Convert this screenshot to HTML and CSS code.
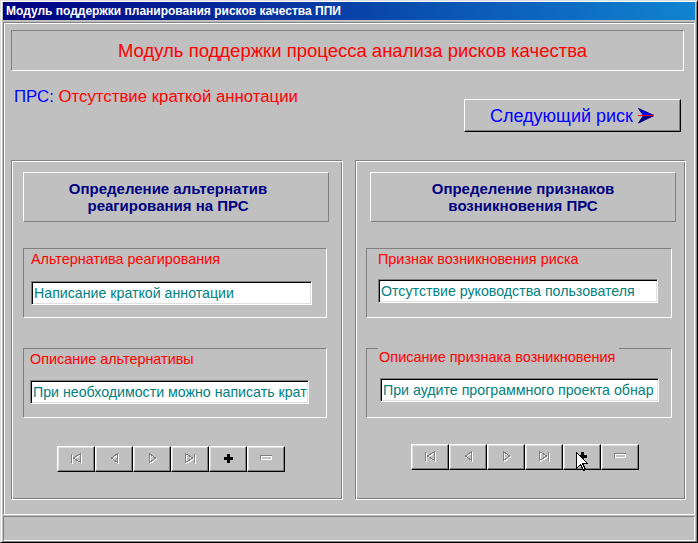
FILE: index.html
```html
<!DOCTYPE html>
<html lang="ru">
<head>
<meta charset="utf-8">
<title>Модуль поддержки планирования рисков качества ППИ</title>
<link rel="stylesheet" href="styles.css">
</head>
<body>
<div class="window">
  <div class="titlebar"><span class="title">Модуль поддержки планирования рисков качества ППИ</span></div>
  <div class="main">
    <div class="banner">Модуль поддержки процесса анализа рисков качества</div>
    <div class="info-row">
      <div class="prs"><span class="prs-key">ПРС:</span> <span class="prs-val">Отсутствие краткой аннотации</span></div>
      <button class="next-btn" type="button"><span>Следующий риск</span><svg class="next-arrow" width="17" height="16" viewBox="0 0 17 16"><polygon points="0.5,0.5 16,7.5 5.5,7.5" fill="#0000ff" stroke="#000080" stroke-width="1"/><polygon points="5.5,7.5 16,7.5 0.5,15" fill="#000080" stroke="#000080" stroke-width="1"/><line x1="0" y1="7.5" x2="16" y2="7.5" stroke="#ff0000" stroke-width="1"/></svg></button>
    </div>
    <div class="panels">
      <section class="panel panel-left">
        <div class="panel-head">Определение альтернатив<br>реагирования на ПРС</div>
        <div class="group group-a">
          <div class="group-label">Альтернатива реагирования</div>
          <div class="field">Написание краткой аннотации</div>
        </div>
        <div class="group group-b">
          <div class="group-label">Описание альтернативы</div>
          <div class="field">При необходимости можно написать крат</div>
        </div>
        <div class="nav">
          <div class="nav-btn"><svg width="13" height="12" viewBox="0 0 13 12"><g fill="none" stroke-width="1" shape-rendering="crispEdges"><path d="M1.5 1.5v9 M10.5 1.5 L3.5 6 L10.5 10.5 Z" stroke="#fff" transform="translate(1 1)"/><path d="M1.5 1.5v9 M10.5 1.5 L3.5 6 L10.5 10.5 Z" stroke="#808080"/></g></svg></div>
          <div class="nav-btn"><svg width="13" height="12" viewBox="0 0 13 12"><g fill="none" stroke-width="1" shape-rendering="crispEdges"><path d="M9.5 1.5 L3.5 6 L9.5 10.5 Z" stroke="#fff" transform="translate(1 1)"/><path d="M9.5 1.5 L3.5 6 L9.5 10.5 Z" stroke="#808080"/></g></svg></div>
          <div class="nav-btn"><svg width="13" height="12" viewBox="0 0 13 12"><g fill="none" stroke-width="1" shape-rendering="crispEdges"><path d="M3.5 1.5 L9.5 6 L3.5 10.5 Z" stroke="#fff" transform="translate(1 1)"/><path d="M3.5 1.5 L9.5 6 L3.5 10.5 Z" stroke="#808080"/></g></svg></div>
          <div class="nav-btn"><svg width="13" height="12" viewBox="0 0 13 12"><g fill="none" stroke-width="1" shape-rendering="crispEdges"><path d="M10.5 1.5v9 M1.5 1.5 L8.5 6 L1.5 10.5 Z" stroke="#fff" transform="translate(1 1)"/><path d="M10.5 1.5v9 M1.5 1.5 L8.5 6 L1.5 10.5 Z" stroke="#808080"/></g></svg></div>
          <div class="nav-btn"><svg width="9" height="9" viewBox="0 0 9 9"><path d="M3 0h3v3h3v3h-3v3h-3v-3h-3v-3h3z" fill="#000"/></svg></div>
          <div class="nav-btn"><svg width="13" height="6" viewBox="0 0 13 6"><g fill="none" shape-rendering="crispEdges"><rect x="1.5" y="1.5" width="10" height="3" stroke="#fff"/><path d="M0.5 4.5V0.5H11.5" stroke="#808080"/></g></svg></div>
        </div>
      </section>
      <section class="panel panel-right">
        <div class="panel-head">Определение признаков<br>возникновения ПРС</div>
        <div class="group group-a">
          <div class="group-label">Признак возникновения риска</div>
          <div class="field">Отсутствие руководства пользователя</div>
        </div>
        <div class="group group-b">
          <div class="group-legend">Описание признака возникновения</div>
          <div class="field">При аудите программного проекта обнар</div>
        </div>
        <div class="nav">
          <div class="nav-btn"><svg width="13" height="12" viewBox="0 0 13 12"><g fill="none" stroke-width="1" shape-rendering="crispEdges"><path d="M1.5 1.5v9 M10.5 1.5 L3.5 6 L10.5 10.5 Z" stroke="#fff" transform="translate(1 1)"/><path d="M1.5 1.5v9 M10.5 1.5 L3.5 6 L10.5 10.5 Z" stroke="#808080"/></g></svg></div>
          <div class="nav-btn"><svg width="13" height="12" viewBox="0 0 13 12"><g fill="none" stroke-width="1" shape-rendering="crispEdges"><path d="M9.5 1.5 L3.5 6 L9.5 10.5 Z" stroke="#fff" transform="translate(1 1)"/><path d="M9.5 1.5 L3.5 6 L9.5 10.5 Z" stroke="#808080"/></g></svg></div>
          <div class="nav-btn"><svg width="13" height="12" viewBox="0 0 13 12"><g fill="none" stroke-width="1" shape-rendering="crispEdges"><path d="M3.5 1.5 L9.5 6 L3.5 10.5 Z" stroke="#fff" transform="translate(1 1)"/><path d="M3.5 1.5 L9.5 6 L3.5 10.5 Z" stroke="#808080"/></g></svg></div>
          <div class="nav-btn"><svg width="13" height="12" viewBox="0 0 13 12"><g fill="none" stroke-width="1" shape-rendering="crispEdges"><path d="M10.5 1.5v9 M1.5 1.5 L8.5 6 L1.5 10.5 Z" stroke="#fff" transform="translate(1 1)"/><path d="M10.5 1.5v9 M1.5 1.5 L8.5 6 L1.5 10.5 Z" stroke="#808080"/></g></svg></div>
          <div class="nav-btn"><svg width="9" height="9" viewBox="0 0 9 9"><path d="M3 0h3v3h3v3h-3v3h-3v-3h-3v-3h3z" fill="#000"/></svg></div>
          <div class="nav-btn"><svg width="13" height="6" viewBox="0 0 13 6"><g fill="none" shape-rendering="crispEdges"><rect x="1.5" y="1.5" width="10" height="3" stroke="#fff"/><path d="M0.5 4.5V0.5H11.5" stroke="#808080"/></g></svg></div>
          <svg class="cursor" width="12" height="20" viewBox="0 0 12 20"><polygon points="0.5,0.5 0.5,16.5 4.5,12.5 7.5,18.5 9.5,17.5 6.5,11.5 11.5,11.5" fill="#fff" stroke="#000" stroke-width="1" shape-rendering="crispEdges"/></svg>
        </div>
      </section>
    </div>
  </div>
  <div class="statusbar"></div>
</div>
</body>
</html>
```

FILE: styles.css
```css
html, body {
  margin: 0;
  padding: 0;
  background: #c0c0c0;
}

body {
  font-family: "Liberation Sans", Arial, sans-serif;
}

.window {
  width: 698px;
  height: 543px;
  box-sizing: border-box;
  background: #c0c0c0;
  border: 1px solid;
  border-color: #dfdfdf #000 #000 #dfdfdf;
  box-shadow: inset 1px 1px 0 #fff, inset -1px -1px 0 #808080;
  padding: 1px;
  display: flex;
  flex-direction: column;
}

.titlebar {
  height: 18px;
  margin: 0 1px;
  background: linear-gradient(to right, #000080, #1084d0);
  display: flex;
  align-items: center;
}

.title {
  color: #fff;
  font-weight: bold;
  font-size: 12px;
  line-height: 18px;
  padding-left: 3px;
  white-space: nowrap;
}

.main {
  margin: 2px 1px 0 1px;
  height: 493px;
  box-sizing: border-box;
  border: 1px solid;
  border-color: #808080 #fff #fff #808080;
  box-shadow: inset 1px 1px 0 #fff;
}

.banner {
  margin: 7px 0 0 7px;
  width: 673px;
  height: 41px;
  box-sizing: border-box;
  border: 1px solid;
  border-color: #808080 #fff #fff #808080;
  display: flex;
  align-items: center;
  justify-content: center;
  padding-left: 10px;
  color: #ff0000;
  font-size: 18.5px;
  line-height: 20px;
  white-space: nowrap;
}

.info-row {
  display: flex;
  justify-content: space-between;
  align-items: flex-start;
  margin-top: 17px;
  padding: 0 13px 0 10px;
}

.prs {
  font-size: 16.8px;
  line-height: 18px;
  white-space: nowrap;
}

.prs-key {
  color: #0000ff;
}

.prs-val {
  color: #ff0000;
}

.next-btn {
  margin-top: 11px;
  width: 217px;
  height: 33px;
  box-sizing: border-box;
  background: #c0c0c0;
  border: 1px solid;
  border-color: #fff #000 #000 #fff;
  box-shadow: inset -1px -1px 0 #808080;
  padding: 0;
  display: flex;
  align-items: center;
  justify-content: center;
  font-family: "Liberation Sans", Arial, sans-serif;
  font-size: 18px;
  line-height: 20px;
  color: #0000ff;
}

.next-arrow {
  margin-left: 5px;
  display: block;
}

.panels {
  display: flex;
  gap: 12px;
  margin: 28px 0 0 7px;
}

.panel {
  height: 340px;
  box-sizing: border-box;
  border: 1px solid;
  border-color: #808080 #fff #fff #808080;
  box-shadow: inset 1px 1px 0 #fff, inset -1px -1px 0 #808080;
}

.panel-left {
  width: 332px;
}

.panel-right {
  width: 331px;
}

.panel-head {
  margin-top: 11px;
  width: 306px;
  height: 50px;
  box-sizing: border-box;
  border: 1px solid;
  border-color: #fff #808080 #808080 #fff;
  display: flex;
  align-items: center;
  justify-content: center;
  text-align: center;
  color: #000080;
  font-weight: bold;
  font-size: 15px;
  line-height: 17px;
}

.panel-left .panel-head {
  margin-left: 11px;
  padding-right: 16px;
}

.panel-right .panel-head {
  margin-left: 14px;
}

.group {
  height: 70px;
  box-sizing: border-box;
  border: 1px solid;
  border-color: #808080 #fff #fff #808080;
  padding-top: 2px;
}

.group-a {
  margin-top: 26px;
}

.group-b {
  margin-top: 30px;
}

.panel-left .group {
  margin-left: 11px;
  width: 304px;
}

.panel-right .group {
  margin-left: 10px;
  width: 306px;
}

.group-label {
  color: #ff0000;
  font-size: 14.4px;
  line-height: 16px;
  white-space: nowrap;
}

.group-legend {
  width: fit-content;
  margin: -4px 0 0 11px;
  padding: 0 4px 0 1px;
  background: #c0c0c0;
  color: #ff0000;
  font-size: 14.5px;
  line-height: 20px;
  white-space: nowrap;
}

.field {
  height: 24px;
  box-sizing: border-box;
  background: #fff;
  border: 1px solid;
  border-color: #808080 #fff #fff #808080;
  box-shadow: inset 1px 1px 0 #000, inset -1px -1px 0 #dfdfdf;
  padding-left: 2px;
  display: flex;
  align-items: center;
  color: #008080;
  font-size: 14.2px;
  line-height: 16px;
  white-space: nowrap;
  overflow: hidden;
}

.panel-left .group-a .group-label { padding-left: 7px; }
.panel-left .group-a .field { margin: 14px 0 0 7px; width: 281px; }
.panel-left .group-b .group-label { padding-left: 6px; }
.panel-left .group-b .field { margin: 13px 0 0 6px; width: 279px; }

.panel-right .group-a .group-label { padding-left: 11px; }
.panel-right .group-a .field { margin: 12px 0 0 11px; width: 280px; }
.panel-right .group-b .field { margin: 11px 0 0 13px; width: 279px; }

.nav {
  position: relative;
  display: flex;
  width: 228px;
}

.panel-left .nav {
  margin: 28px 0 0 45px;
}

.panel-right .nav {
  margin: 26px 0 0 55px;
}

.nav-btn {
  width: 38px;
  height: 26px;
  box-sizing: border-box;
  border: 1px solid;
  border-color: #fff #000 #000 #fff;
  box-shadow: inset -1px -1px 0 #808080, inset 1px 1px 0 #dfdfdf;
  display: flex;
  align-items: center;
  justify-content: center;
  padding-bottom: 2px;
}

.nav-btn svg {
  display: block;
}

.cursor {
  position: absolute;
  left: 165px;
  top: 8px;
}

.statusbar {
  margin: 1px 1px 0 1px;
  height: 25px;
  box-sizing: border-box;
  border: 1px solid;
  border-color: #808080 #fff #fff #808080;
}
```
